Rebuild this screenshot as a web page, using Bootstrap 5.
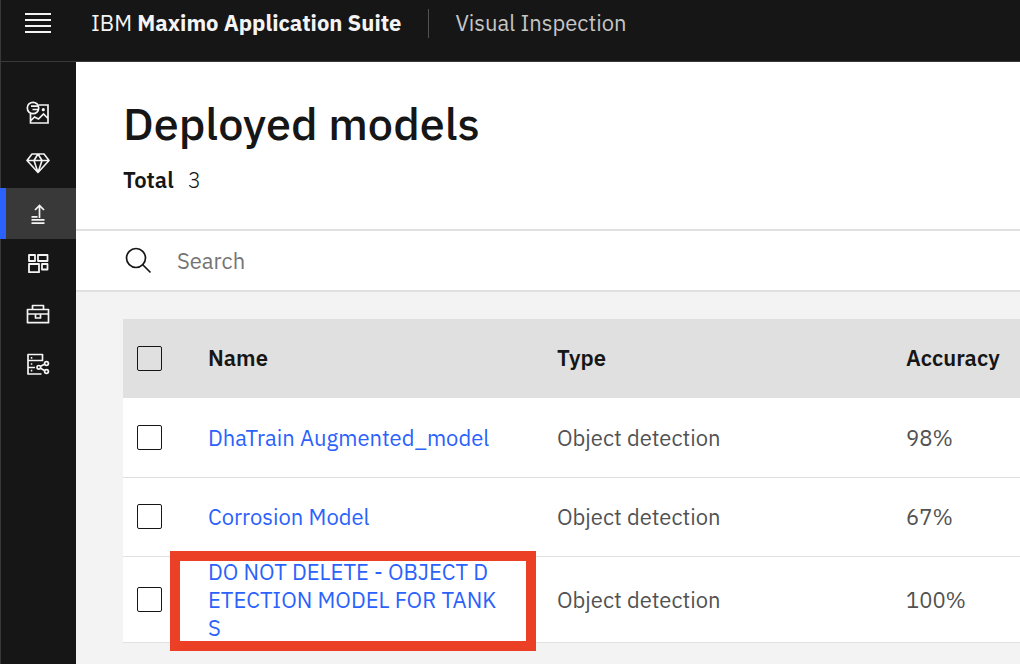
<!DOCTYPE html>
<html lang="en">
<head>
<meta charset="utf-8">
<meta name="viewport" content="width=device-width, initial-scale=1">
<title>Deployed models</title>
<link href="https://cdn.jsdelivr.net/npm/bootstrap@5.3.0/dist/css/bootstrap.min.css" rel="stylesheet">
<style>
  body { font-family: "IBM Plex Sans", Roboto, "Liberation Sans", sans-serif; font-size: 22px; line-height: 28px; color: #161616; background: #f3f3f3; overflow: hidden; }
  strong { font-weight: 600; }
  .suite-bar { height: 62px; background: #161616; border-bottom: 1px solid #393939; border-left: 1px solid #393939; color: #f4f4f4; padding-bottom: 15px; }
  .menu-btn { width: 74px; line-height: 0; }
  .suite-name { padding-left: 16px; color: #f4f4f4; }
  .suite-name strong { font-weight: 700; }
  .bar-divider { width: 1px; height: 29px; background: #525252; margin: 0 26px 0 27px; }
  .app-name { color: #c6c6c6; }
  .side-rail { width: 76px; background: #161616; border-left: 1px solid #393939; padding-top: 26px; }
  .side-rail a { height: 50px; padding-right: 2px; color: #f4f4f4; }
  .side-rail a.active { height: 51px; background: #393939; box-shadow: inset 5px 0 #2b62fb; margin-left: -1px; border-left: 1px solid #2b62fb; }
  .page-head { padding: 32px 47px 35px; border-bottom: 2px solid #e0e0e0; }
  .page-head h1 { font-size: 45px; line-height: 58px; font-weight: 500; margin-bottom: 14px; }
  .total-count { margin-left: 14px; font-weight: 300; }
  .search-row { height: 61px; border-bottom: 2px solid #e0e0e0; padding-left: 49px; }
  .search-row input { font-size: 22px; color: #161616; padding: 0; margin-left: 25px; }
  .search-row input::placeholder { color: #757575; opacity: 1; }
  .table-wrap { padding: 27px 0 21px 47px; }
  .models { table-layout: fixed; --bs-table-bg: #fff; --bs-table-color: #525252; }
  .models th, .models td { height: 79px; padding: 0 0 0 25px; border-bottom: 1px solid #e0e0e0; vertical-align: middle; }
  .models thead th { background: #e0e0e0; color: #161616; font-weight: 600; border-bottom-color: #fff; }
  .models .pick-cell { padding-left: 14px; }
  .models .form-check-input { display: block; width: 25px; height: 25px; margin: 0; border: 1px solid #161616; border-radius: 2px; background-color: transparent; }
  .models .flagged td { height: 86px; padding-top: 1px; }
  .models td a { color: #2b62fb; text-decoration: none; }
  .flag-box { position: absolute; inset: -6px -4px -9px -13px; border: 10px solid #eb4026; pointer-events: none; }
  .col-pick { width: 60px; }
  .col-name { width: 349px; }
  .col-type { width: 349px; }
</style>
</head>
<body>
<div class="d-flex flex-column min-vh-100">
  <header class="suite-bar d-flex align-items-center">
    <button type="button" class="menu-btn btn border-0 p-0" aria-label="Menu">
      <svg width="26" height="20" viewBox="0 0 26 20" fill="#f4f4f4"><path d="M0 0h26v2H0zM0 6h26v2H0zM0 12h26v2H0zM0 18h26v2H0z"/></svg>
    </button>
    <a href="#" class="suite-name text-decoration-none text-nowrap">IBM <strong>Maximo Application Suite</strong></a>
    <span class="bar-divider"></span>
    <span class="app-name text-nowrap">Visual Inspection</span>
  </header>

  <div class="d-flex flex-grow-1">
    <nav class="side-rail d-flex flex-column flex-shrink-0" aria-label="Sections">
      <a href="#" class="d-flex align-items-center justify-content-center" aria-label="Data sets">
        <svg width="24" height="24" viewBox="0 0 24 24" fill="none" stroke="currentColor" stroke-width="1.7"><path d="M12.500 4H22v18H4.500v-9.500M4.500 20l4-4 4 2 5-5 4.500 4.500"/><circle cx="7" cy="7" r="5.700"/><path d="M5 5.200h7M6.500 8.500H12"/><circle cx="17.300" cy="8.700" r="1.600" fill="currentColor" stroke="none"/></svg>
      </a>
      <a href="#" class="d-flex align-items-center justify-content-center" aria-label="Models">
        <svg width="24" height="24" viewBox="0 0 24 24" fill="none" stroke="currentColor" stroke-width="1.6" stroke-linejoin="round"><path d="M6 3h12l5 6.500L12 21.500 1 9.500zM1 9.500h22M12 3L8 9.500l4 12 4-12z"/></svg>
      </a>
      <a href="#" class="active d-flex align-items-center justify-content-center" aria-label="Deployed models" aria-current="page">
        <svg width="24" height="24" viewBox="0 0 24 24" fill="none" stroke="currentColor" stroke-width="1.7"><path d="M13.500 16V3.500M9 8l4.500-4.500L18 8M5.500 14.800h6M5.500 17.800h13M5.500 21.200h13"/></svg>
      </a>
      <a href="#" class="d-flex align-items-center justify-content-center" aria-label="Categories">
        <svg width="24" height="24" viewBox="0 0 24 24" fill="none" stroke="currentColor" stroke-width="1.8" stroke-linejoin="round"><path d="M3 3h6v6H3zM12 3h9.500v6H12zM3 12h10v8.200H3zM16 12h5.500v5.500H16z"/></svg>
      </a>
      <a href="#" class="d-flex align-items-center justify-content-center" aria-label="Toolkit">
        <svg width="24" height="24" viewBox="0 0 24 24" fill="none" stroke="currentColor" stroke-width="1.7" stroke-linejoin="round"><path d="M1.500 7.500h21v13.200h-21zM6.500 7.500V3.500h11v4M1.500 12h21M9.500 12v4h5v-4"/></svg>
      </a>
      <a href="#" class="d-flex align-items-center justify-content-center" aria-label="Services">
        <svg width="24" height="24" viewBox="0 0 24 24" fill="none" stroke="currentColor" stroke-width="1.7" stroke-linejoin="round"><path d="M15.500 22H2V2.500h14.500v6H2M2 15.500h7M18.500 12.300l-4 2M14.500 16.300l4 2.200"/><circle cx="12.800" cy="15.300" r="1.800"/><circle cx="20.500" cy="11.500" r="1.900"/><circle cx="20.500" cy="19.500" r="1.900"/><path d="M4.800 5.800h1.500M4.800 12h1.500M4.800 18.700h1.500"/></svg>
      </a>
    </nav>

    <main class="flex-grow-1 overflow-hidden">
      <section class="page-head bg-white">
        <h1>Deployed models</h1>
        <div><strong>Total</strong><span class="total-count">3</span></div>
      </section>
      <form class="search-row bg-white d-flex align-items-center" role="search">
        <label for="model-search" class="d-flex">
          <svg width="27" height="27" viewBox="0 0 27 27" fill="none" stroke="#161616" stroke-width="1.700"><circle cx="11" cy="11" r="9.500"/><path d="M17.500 17.500l8 8"/></svg>
        </label>
        <input id="model-search" type="text" class="form-control border-0 shadow-none rounded-0" placeholder="Search" aria-label="Search">
      </form>
      <div class="table-wrap">
        <table class="models table mb-0">
          <colgroup><col class="col-pick"><col class="col-name"><col class="col-type"><col></colgroup>
          <thead>
            <tr>
              <th class="pick-cell"><input class="form-check-input" type="checkbox" aria-label="Select all models"></th>
              <th scope="col">Name</th><th scope="col">Type</th><th scope="col">Accuracy</th>
            </tr>
          </thead>
          <tbody>
            <tr>
              <td class="pick-cell"><input class="form-check-input" type="checkbox" aria-label="Select DhaTrain Augmented_model"></td>
              <td><a href="#">DhaTrain Augmented_model</a></td><td>Object detection</td><td>98%</td>
            </tr>
            <tr>
              <td class="pick-cell"><input class="form-check-input" type="checkbox" aria-label="Select Corrosion Model"></td>
              <td><a href="#">Corrosion Model</a></td><td>Object detection</td><td>67%</td>
            </tr>
            <tr class="flagged">
              <td class="pick-cell"><input class="form-check-input" type="checkbox" aria-label="Select object detection model for tanks"></td>
              <td class="position-relative"><a href="#">DO NOT DELETE - OBJECT D<br>ETECTION MODEL FOR TANK<br>S</a><span class="flag-box"></span></td>
              <td>Object detection</td><td>100%</td>
            </tr>
          </tbody>
        </table>
      </div>
    </main>
  </div>
</div>
<script src="https://cdn.jsdelivr.net/npm/bootstrap@5.3.0/dist/js/bootstrap.bundle.min.js"></script>
</body>
</html>
